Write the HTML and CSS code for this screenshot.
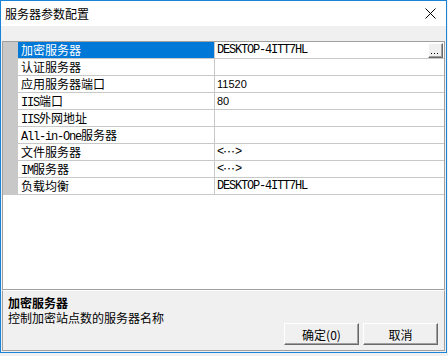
FILE: index.html
```html
<!DOCTYPE html>
<html>
<head>
    <meta charset="utf-8">
    <link rel="stylesheet" href="styles.css">
    <title>服务器参数配置</title>
</head>
<body>
<div class="window">
    <div class="titlebar">
        <span class="title">服务器参数配置</span>
        <svg class="close" width="11" height="11" viewBox="0 0 11 11">
            <path d="M0.5 0.5 L10.5 10.5 M10.5 0.5 L0.5 10.5" stroke="#000" stroke-width="1" fill="none"/>
        </svg>
    </div>
    <div class="client">
        <div class="toolbar"></div>
        <div class="grid">
            <div class="row selected">
                <div class="gutter"></div>
                <div class="name">加密服务器</div>
                <div class="value">
                    <span class="en">DESKTOP-4ITT7HL</span>
                    <span class="dots">
                        <svg width="13" height="13" viewBox="0 0 13 13">
                            <rect x="2" y="9" width="1" height="1" fill="#000"/>
                            <rect x="5" y="9" width="1" height="1" fill="#000"/>
                            <rect x="8" y="9" width="1" height="1" fill="#000"/>
                        </svg>
                    </span>
                </div>
            </div>
            <div class="row">
                <div class="gutter"></div>
                <div class="name">认证服务器</div>
                <div class="value"></div>
            </div>
            <div class="row">
                <div class="gutter"></div>
                <div class="name">应用服务器端口</div>
                <div class="value"><span class="num">11520</span></div>
            </div>
            <div class="row">
                <div class="gutter"></div>
                <div class="name"><span class="en">IIS</span>端口</div>
                <div class="value"><span class="num">80</span></div>
            </div>
            <div class="row">
                <div class="gutter"></div>
                <div class="name"><span class="en">IIS</span>外网地址</div>
                <div class="value"></div>
            </div>
            <div class="row">
                <div class="gutter"></div>
                <div class="name"><span class="en">All-in-One</span>服务器</div>
                <div class="value"></div>
            </div>
            <div class="row">
                <div class="gutter"></div>
                <div class="name">文件服务器</div>
                <div class="value"><span class="en">&lt;</span><span class="ell">…</span><span class="en">&gt;</span></div>
            </div>
            <div class="row">
                <div class="gutter"></div>
                <div class="name"><span class="en">IM</span>服务器</div>
                <div class="value"><span class="en">&lt;</span><span class="ell">…</span><span class="en">&gt;</span></div>
            </div>
            <div class="row">
                <div class="gutter"></div>
                <div class="name">负载均衡</div>
                <div class="value"><span class="en">DESKTOP-4ITT7HL</span></div>
            </div>
        </div>
        <div class="help">
            <div class="help-info">
                <div class="help-title">加密服务器</div>
                <div class="help-text">控制加密站点数的服务器名称</div>
            </div>
            <div class="buttons">
                <button class="btn">确定(0)</button>
                <button class="btn">取消</button>
            </div>
        </div>
    </div>
</div>
</body>
</html>
```

FILE: styles.css
```css
html, body{
    margin: 0;
    padding: 0;
    background-color: #f0f0f0;
}
body{
    font-family: "Noto Sans CJK SC", sans-serif;
    font-size: 12px;
    color: #000;
}
.window{
    box-sizing: border-box;
    width: 447px;
    height: 353px;
    border: 1px solid #1883d7;
    background-color: #f0f0f0;
    display: flex;
    flex-direction: column;
}
.titlebar{
    height: 25px;
    background-color: #fff;
    display: flex;
    align-items: center;
    justify-content: space-between;
    padding: 0 10px 0 4px;
}
.title{
    line-height: 24px;
}
.close{
    display: block;
}
.client{
    flex: 1;
    display: flex;
    flex-direction: column;
    padding: 0 1px 1px 1px;
}
.toolbar{
    height: 15px;
}
.grid{
    box-sizing: border-box;
    height: 249px;
    border: 1px solid #a0a0a0;
    background-color: #fff;
}
.row{
    display: flex;
    height: 17px;
}
.gutter{
    width: 15px;
    background-color: #c8c8c8;
}
.name, .value{
    box-sizing: border-box;
    height: 17px;
    border-bottom: 1px solid #c8c8c8;
    line-height: 16px;
    white-space: nowrap;
    overflow: hidden;
}
.name{
    width: 196px;
    padding-left: 3px;
}
.value{
    flex: 1;
    border-left: 1px solid #c8c8c8;
    padding-left: 2px;
    display: flex;
    align-items: center;
}
.row.selected .name{
    background-color: #0078d7;
    color: #fff;
}
.en{
    font-family: "Liberation Mono", monospace;
    font-size: 12px;
    letter-spacing: -1.2px;
}
.num{
    font-family: "Liberation Sans", sans-serif;
    font-size: 11px;
}
.ell{
    font-family: "Noto Sans CJK SC", sans-serif;
    font-size: 12px;
}
.dots{
    margin-left: auto;
    margin-right: 1px;
    box-sizing: border-box;
    width: 15px;
    height: 15px;
    background-color: #f0f0f0;
    border: 1px solid;
    border-color: #fff #696969 #696969 #fff;
    box-shadow: inset -1px -1px #a0a0a0;
}
.dots svg{
    display: block;
}
.help{
    flex: 1;
    border: 1px solid #a0a0a0;
    border-top: 1px solid #fff;
    display: flex;
    justify-content: space-between;
    align-items: flex-end;
    padding: 0 6px 5px 5px;
}
.help-info{
    align-self: flex-start;
    padding-top: 4px;
    line-height: 15px;
}
.help-title{
    font-weight: bold;
}
.buttons{
    display: flex;
    gap: 4px;
}
.btn{
    box-sizing: border-box;
    width: 75px;
    height: 22px;
    padding: 0;
    font-family: "Noto Sans CJK SC", sans-serif;
    font-size: 12px;
    color: #000;
    background-color: #f0f0f0;
    border: 1px solid;
    border-color: #fff #696969 #696969 #fff;
    box-shadow: inset -1px -1px #a0a0a0;
}
```
